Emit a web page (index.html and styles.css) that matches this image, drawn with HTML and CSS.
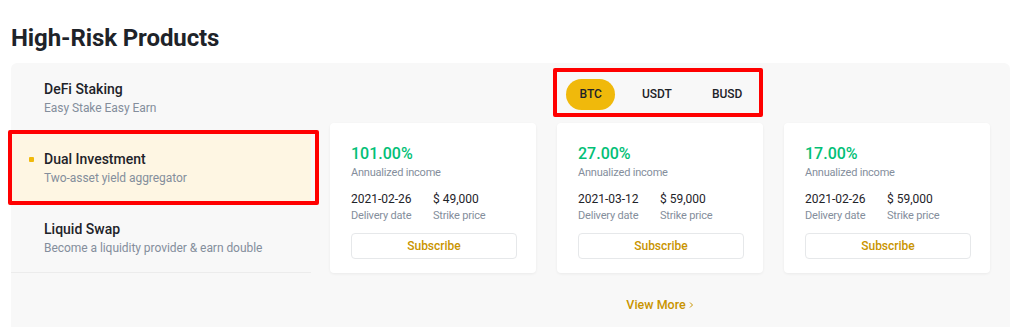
FILE: index.html
```html
<!DOCTYPE html>
<html>
<head>
<meta charset="utf-8">
<link rel="stylesheet" href="styles.css">
</head>
<body>
<div class="page">
  <h1 class="title">High-Risk Products</h1>
  <div class="panel">
    <ul class="menu">
      <li class="menu-item">
        <div class="menu-name">DeFi Staking</div>
        <div class="menu-desc">Easy Stake Easy Earn</div>
      </li>
      <li class="menu-item active">
        <span class="dot"></span>
        <div class="menu-name">Dual Investment</div>
        <div class="menu-desc">Two-asset yield aggregator</div>
        <span class="mark mark-menu"></span>
      </li>
      <li class="menu-item">
        <div class="menu-name">Liquid Swap</div>
        <div class="menu-desc">Become a liquidity provider &amp; earn double</div>
      </li>
    </ul>
    <div class="content">
      <div class="tabs-wrap">
        <div class="tabs">
          <span class="tab selected">BTC</span>
          <span class="tab">USDT</span>
          <span class="tab">BUSD</span>
          <span class="mark mark-tabs"></span>
        </div>
      </div>
      <div class="cards">
        <div class="card">
          <div class="rate">101.00%</div>
          <div class="label">Annualized income</div>
          <div class="facts">
            <div class="fact"><div class="value">2021-02-26</div><div class="label">Delivery date</div></div>
            <div class="fact"><div class="value">$ 49,000</div><div class="label">Strike price</div></div>
          </div>
          <button class="subscribe">Subscribe</button>
        </div>
        <div class="card">
          <div class="rate">27.00%</div>
          <div class="label">Annualized income</div>
          <div class="facts">
            <div class="fact"><div class="value">2021-03-12</div><div class="label">Delivery date</div></div>
            <div class="fact"><div class="value">$ 59,000</div><div class="label">Strike price</div></div>
          </div>
          <button class="subscribe">Subscribe</button>
        </div>
        <div class="card">
          <div class="rate">17.00%</div>
          <div class="label">Annualized income</div>
          <div class="facts">
            <div class="fact"><div class="value">2021-02-26</div><div class="label">Delivery date</div></div>
            <div class="fact"><div class="value">$ 59,000</div><div class="label">Strike price</div></div>
          </div>
          <button class="subscribe">Subscribe</button>
        </div>
      </div>
      <div class="more"><span>View More</span><svg class="chev" width="5" height="8" viewBox="0 0 5 8"><path d="M1 1.5l2.5 2.5-2.5 2.5" fill="none" stroke="#c99400" stroke-width="1"/></svg></div>
    </div>
  </div>
</div>
</body>
</html>
```

FILE: styles.css
```css
* { box-sizing: border-box; }
body {
  margin: 0;
  background: #ffffff;
  font-family: Roboto, "Noto Sans", "Liberation Sans", sans-serif;
  color: #1e2329;
}
.page {
  padding: 0 0 0 11px;
  width: 1010px;
}
.title {
  margin: 0;
  padding-top: 24px;
  height: 63px;
  font-size: 24px;
  line-height: 28px;
  font-weight: 700;
  color: #1e2329;
  letter-spacing: -0.1px;
}
.panel {
  display: grid;
  grid-template-columns: 300px 1fr;
  background: #f8f8f8;
  border-radius: 6px 6px 0 0;
  padding-right: 20px;
  height: 280px;
}
.menu {
  list-style: none;
  margin: 0;
  padding: 0;
}
.menu-item {
  position: relative;
  height: 70px;
  padding: 16px 0 0 33px;
}
.menu-item:last-child {
  border-bottom: 1px solid #ececec;
}
.menu-item.active {
  background: #fef6e3;
}
.dot {
  position: absolute;
  left: 18px;
  top: 24px;
  width: 5px;
  height: 5px;
  border-radius: 1px;
  background: #f0b90b;
}
.menu-name {
  font-size: 14px;
  line-height: 20px;
  font-weight: 500;
  color: #1e2329;
}
.menu-desc {
  font-size: 12px;
  line-height: 18px;
  color: #848e9c;
  letter-spacing: -0.05px;
}
.mark {
  position: absolute;
  border: 4px solid #ff0000;
  border-radius: 2px;
  pointer-events: none;
}
.mark-menu {
  left: -3px;
  top: -3px;
  width: 311px;
  height: 75px;
}
.content {
  padding-left: 19px;
  padding-top: 16px;
}
.tabs-wrap {
  display: flex;
  justify-content: center;
}
.tabs {
  position: relative;
  display: flex;
  gap: 13px;
  padding-right: 4px;
  margin-left: 6px;
}
.tab {
  height: 31px;
  line-height: 31px;
  padding: 0 13.5px;
  border-radius: 16px;
  font-size: 12px;
  font-weight: 500;
  color: #1e2329;
}
.tab.selected {
  background: #f0b90b;
}
.mark-tabs {
  left: -13px;
  top: -11px;
  width: 210px;
  height: 49px;
}
.cards {
  display: grid;
  grid-template-columns: repeat(3, 206px);
  column-gap: 21px;
  margin-top: 13px;
}
.card {
  background: #ffffff;
  border-radius: 4px;
  box-shadow: 0 1px 3px rgba(0, 0, 0, 0.06);
  height: 150px;
  padding: 20px 20px 0 21px;
}
.rate {
  font-size: 16px;
  line-height: 22px;
  font-weight: 500;
  color: #02c076;
}
.label {
  font-size: 11px;
  line-height: 16px;
  color: #848e9c;
  letter-spacing: -0.2px;
}
.facts {
  display: flex;
  margin-top: 10px;
}
.fact {
  width: 82px;
}
.value {
  font-size: 12px;
  line-height: 17px;
  color: #1e2329;
}
.subscribe {
  display: block;
  margin-top: 9px;
  width: 166px;
  height: 26px;
  border: 1px solid #e6e8ea;
  border-radius: 4px;
  background: #ffffff;
  font-family: inherit;
  font-size: 12px;
  font-weight: 500;
  color: #c99400;
  padding: 0;
}
.more {
  display: flex;
  justify-content: center;
  align-items: center;
  gap: 3px;
  margin-top: 23px;
  font-size: 12.5px;
  line-height: 18px;
  font-weight: 500;
  color: #c99400;
}
.chev { display: block; }
```
